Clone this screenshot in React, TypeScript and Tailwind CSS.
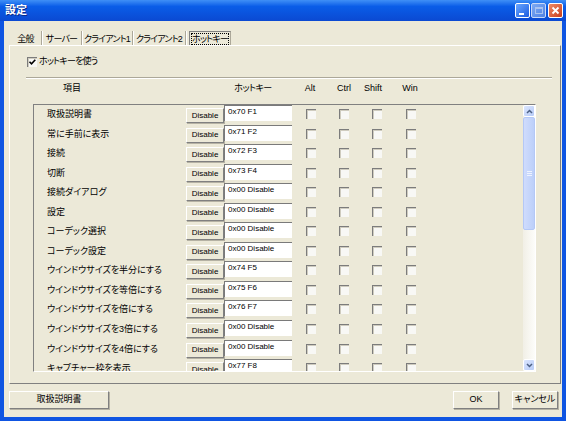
import React from 'react';

type Row = { label: string; key: string };

const rows: Row[] = [
  { label: '取扱説明書', key: '0x70 F1' },
  { label: '常に手前に表示', key: '0x71 F2' },
  { label: '接続', key: '0x72 F3' },
  { label: '切断', key: '0x73 F4' },
  { label: '接続ダイアログ', key: '0x00 Disable' },
  { label: '設定', key: '0x00 Disable' },
  { label: 'コーデック選択', key: '0x00 Disable' },
  { label: 'コーデック設定', key: '0x00 Disable' },
  { label: 'ウインドウサイズを半分にする', key: '0x74 F5' },
  { label: 'ウインドウサイズを等倍にする', key: '0x75 F6' },
  { label: 'ウインドウサイズを倍にする', key: '0x76 F7' },
  { label: 'ウインドウサイズを3倍にする', key: '0x00 Disable' },
  { label: 'ウインドウサイズを4倍にする', key: '0x00 Disable' },
  { label: 'キャプチャー枠を表示', key: '0x77 F8' },
];

const Check = ({ checked = false, className = '' }: { checked?: boolean; className?: string }) => (
  <div
    className={`relative w-[10px] h-[10px] shrink-0 bg-[#f8f8f5] border-t border-l border-[#7c7c7c] shadow-[inset_1px_1px_0_#cfccbf] ${className}`}
  >
    {checked && (
      <svg className="absolute left-0 top-0" width="9" height="9" viewBox="0 0 9 9">
        <path d="M1.5 3.8 L3.5 5.8 L7.3 1.8" stroke="#000" strokeWidth="1.6" fill="none" />
      </svg>
    )}
  </div>
);

const Btn = ({ children, className = '' }: { children: React.ReactNode; className?: string }) => (
  <div
    className={`flex items-center justify-center shrink-0 whitespace-nowrap bg-[#ECE9D8] border border-t-white border-l-white border-r-[#808080] border-b-[#808080] shadow-[1px_1px_0_#b5b2a4] ${className}`}
  >
    {children}
  </div>
);

const Chevron = ({ up }: { up?: boolean }) => (
  <svg width="7" height="5" viewBox="0 0 7 5">
    <path d={up ? 'M1 4 L3.5 1.5 L6 4' : 'M1 1 L3.5 3.5 L6 1'} stroke="#4d6185" strokeWidth="1.5" fill="none" />
  </svg>
);

const TitleButtons = () => (
  <div className="flex items-center pr-[3px]">
    <div className="relative w-[15px] h-[15px] rounded-[2px] border border-white bg-linear-to-br from-[#6aa6ff] to-[#1d5be0]">
      <div className="absolute left-[3px] bottom-[2px] w-[5px] h-[2px] bg-white" />
    </div>
    <div className="ml-[1px] flex items-center justify-center w-[15px] h-[15px] rounded-[2px] border border-[#c9d9f7] bg-linear-to-br from-[#7eaaf2] to-[#4f82e6]">
      <div className="w-[8px] h-[7px] border border-t-2 border-[#a9c3f1]" />
    </div>
    <div className="ml-[2px] flex items-center justify-center w-[15px] h-[15px] rounded-[2px] border border-white bg-linear-to-br from-[#ef8a64] to-[#c83d1b]">
      <svg width="9" height="9" viewBox="0 0 9 9">
        <path d="M1.5 1.5 L7.5 7.5 M7.5 1.5 L1.5 7.5" stroke="#fff" strokeWidth="1.8" />
      </svg>
    </div>
  </div>
);

const Tab = ({ label, w }: { label: string; w: string }) => (
  <div
    className={`${w} h-[14px] flex justify-center whitespace-nowrap text-[9px] leading-[16px] tracking-[-0.8px] border-r border-[#aca899] shadow-[1px_0_0_#fff]`}
  >
    {label}
  </div>
);

export default function App() {
  return (
    <div className="w-[566px] h-[421px] flex flex-col bg-[#0f55e2] px-[4px] pb-[4px] overflow-hidden text-black font-['Liberation_Sans','Noto_Sans_CJK_JP',sans-serif] [font-feature-settings:'palt']">
      {/* title bar */}
      <div className="-mx-[4px] h-[21px] shrink-0 flex items-center justify-between pl-[5px] bg-linear-to-b from-[#3f8ff6] via-[#0a5de8] via-30% to-[#0b49d2]">
        <span className="text-[11px] font-bold text-white [text-shadow:1px_1px_0_#0a2a8a]">設定</span>
        <TitleButtons />
      </div>

      {/* body */}
      <div className="flex-1 flex flex-col bg-[#ECE9D8]">
        {/* tabs */}
        <div className="h-[24px] shrink-0 flex items-start pt-[10px] pl-[6px]">
          <Tab label="全般" w="w-[32px]" />
          <Tab label="サーバー" w="w-[40px]" />
          <Tab label="クライアント1" w="w-[51px]" />
          <Tab label="クライアント2" w="w-[53px]" />
          <div className="ml-[3px] w-[42px] h-[14px] border-t border-l border-r border-t-[#808080] border-l-[#808080] border-r-[#aca899]">
            <div className="m-[1px] h-[12px] flex justify-center whitespace-nowrap border border-dotted border-black text-[9px] leading-[11px] tracking-[-0.8px]">
              ホットキー
            </div>
          </div>
        </div>

        {/* panel */}
        <div className="ml-[5px] w-[552px] h-[339px] shrink-0 flex flex-col border border-t-white border-l-white border-r-[#808080] border-b-[#808080]">
          <div className="mt-[9px] h-[14px] flex items-center pl-[17px] whitespace-nowrap">
            <Check checked />
            <span className="ml-[2px] text-[9px] tracking-[-0.8px]">ホットキーを使う</span>
          </div>

          <div className="mt-[8px] ml-[16px] w-[526px] h-[2px] border-t border-b border-t-[#aca899] border-b-white" />

          <div className="mt-[2px] h-[16px] flex items-center pl-[23px] text-[9px] whitespace-nowrap">
            <div className="w-[78px] flex justify-center">項目</div>
            <div className="ml-[122px] w-[40px] flex justify-center tracking-[-0.5px]">ホットキー</div>
            <div className="ml-[25px] w-[24px] flex justify-center">Alt</div>
            <div className="ml-[10px] w-[24px] flex justify-center">Ctrl</div>
            <div className="ml-[5px] w-[24px] flex justify-center">Shift</div>
            <div className="ml-[13px] w-[24px] flex justify-center">Win</div>
          </div>

          {/* list frame */}
          <div className="mt-[7px] ml-[23px] w-[503px] h-[268px] flex overflow-hidden border border-t-[#808080] border-l-[#808080] border-r-white border-b-white">
            <div className="flex-1 flex flex-col">
              {rows.map((r) => (
                <div key={r.label} className="h-[19.55px] shrink-0 flex">
                  <div className="w-[152px] pl-[13px] text-[9px] leading-[19px] whitespace-nowrap">{r.label}</div>
                  <Btn className="mt-[3px] w-[38px] h-[15px] text-[8px]">Disable</Btn>
                  <div className="w-[68px] h-[16px] bg-white border-t border-l border-[#7a7a7a] pl-[3px] text-[8px] leading-[11px] whitespace-nowrap">
                    {r.key}
                  </div>
                  <Check className="mt-[4px] ml-[14px]" />
                  <Check className="mt-[4px] ml-[23px]" />
                  <Check className="mt-[4px] ml-[23px]" />
                  <Check className="mt-[4px] ml-[24px]" />
                </div>
              ))}
            </div>

            {/* scrollbar */}
            <div className="w-[12px] shrink-0 flex flex-col bg-linear-to-r from-[#f1efe6] to-[#fdfdfa]">
              <div className="h-[12px] flex items-center justify-center rounded-[2px] border border-white bg-linear-to-br from-[#dbe6fe] to-[#b7cbf7]">
                <Chevron up />
              </div>
              <div className="h-[113px] flex flex-col items-center justify-center gap-[1px] rounded-[2px] border border-[#b4c8f6] bg-linear-to-r from-[#cfdcfd] to-[#bccff9]">
                <div className="w-[5px] h-[1px] bg-[#eef3ff]" />
                <div className="w-[5px] h-[1px] bg-[#eef3ff]" />
                <div className="w-[5px] h-[1px] bg-[#eef3ff]" />
              </div>
              <div className="flex-1" />
              <div className="h-[12px] flex items-center justify-center rounded-[2px] border border-white bg-linear-to-br from-[#dbe6fe] to-[#b7cbf7]">
                <Chevron />
              </div>
            </div>
          </div>
        </div>

        {/* bottom buttons */}
        <div className="mt-[7px] flex text-[9px]">
          <Btn className="ml-[5px] w-[100px] h-[18px]">取扱説明書</Btn>
          <Btn className="ml-auto w-[46px] h-[18px]">OK</Btn>
          <Btn className="ml-[13px] mr-[4px] w-[46px] h-[18px]">キャンセル</Btn>
        </div>
      </div>
    </div>
  );
}
